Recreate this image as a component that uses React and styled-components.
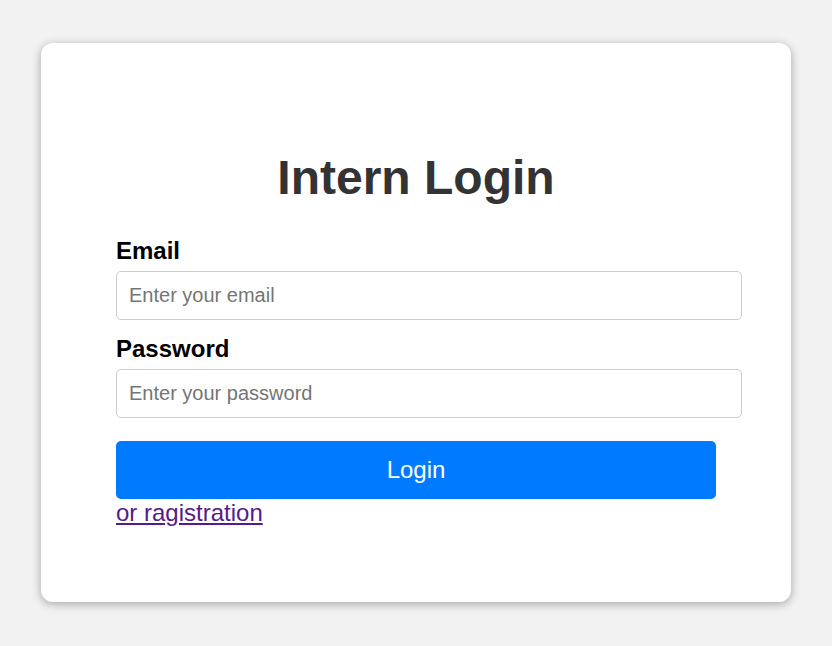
import React, { useState } from "react";
import styled, { createGlobalStyle } from "styled-components";

const GlobalStyle = createGlobalStyle`
  * {
    box-sizing: content-box;
  }
  body {
    margin: 0;
    background: #f2f2f2;
    font-family: "Liberation Sans", Arial, sans-serif;
  }
`;

const Page = styled.div`
  min-height: 100vh;
  display: flex;
  align-items: center;
  justify-content: center;
`;

const Card = styled.div`
  width: 600px;
  height: 409px;
  padding: 75px;
  margin-top: -1px;
  background: #fff;
  border-radius: 12px;
  box-shadow: 0 2px 10px rgba(0, 0, 0, 0.32);
`;

const Title = styled.h1`
  margin: 32px 0 32px;
  text-align: center;
  font-size: 48px;
  font-weight: bold;
  color: #333;
`;

const Field = styled.div`
  display: flex;
  flex-direction: column;
  align-items: flex-start;
  margin-bottom: ${(p) => p.$gap}px;
`;

const Label = styled.label`
  display: block;
  font-size: 24px;
  font-weight: bold;
  color: #000;
  margin-bottom: 6px;
`;

const Input = styled.input`
  width: 600px;
  padding: 12px;
  font-size: 20px;
  font-family: "Liberation Sans", Arial, sans-serif;
  border: 1px solid #ccc;
  border-radius: 5px;
  outline: none;
  color: #333;

  &::placeholder {
    color: #757575;
  }
`;

const Button = styled.button`
  display: block;
  width: 600px;
  padding: 15px 0;
  border: none;
  border-radius: 5px;
  background: #007bff;
  color: #fff;
  font-size: 24px;
  font-family: "Liberation Sans", Arial, sans-serif;
  cursor: pointer;
`;

const RegLink = styled.a`
  font-size: 24px;
  color: #551a8b;
  text-decoration: underline;
`;

function App() {
  const [email, setEmail] = useState("");
  const [password, setPassword] = useState("");

  return (
    <Page>
      <GlobalStyle />
      <Card>
        <Title>Intern Login</Title>
        <form onSubmit={(e) => e.preventDefault()}>
          <Field $gap={15}>
            <Label htmlFor="email">Email</Label>
            <Input
              id="email"
              type="email"
              placeholder="Enter your email"
              value={email}
              onChange={(e) => setEmail(e.target.value)}
            />
          </Field>
          <Field $gap={23}>
            <Label htmlFor="password">Password</Label>
            <Input
              id="password"
              type="password"
              placeholder="Enter your password"
              value={password}
              onChange={(e) => setPassword(e.target.value)}
            />
          </Field>
          <Button type="submit">Login</Button>
          <RegLink href="#">or ragistration</RegLink>
        </form>
      </Card>
    </Page>
  );
}

export default App;
